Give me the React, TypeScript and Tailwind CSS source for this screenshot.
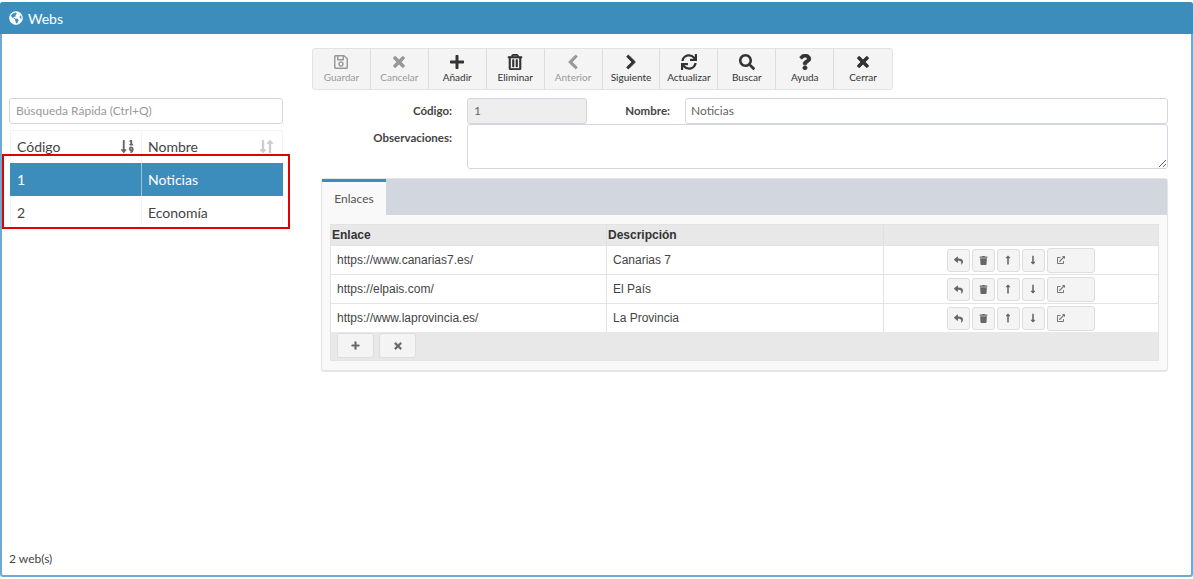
import { ReactNode } from "react"
import {
  FaExternalLinkAlt,
  FaGlobeAmericas,
  FaLongArrowAltDown,
  FaLongArrowAltUp,
  FaPlus,
  FaQuestion,
  FaRegSave,
  FaRegTrashAlt,
  FaReply,
  FaChevronLeft,
  FaChevronRight,
  FaSearch,
  FaSortNumericDown,
  FaSync,
  FaTimes,
  FaTrash,
} from "react-icons/fa"

const tools = [
  { label: "Guardar", icon: <FaRegSave className="h-4 w-4" />, off: true },
  { label: "Cancelar", icon: <FaTimes className="h-4 w-4" stroke="currentColor" strokeWidth={30} />, off: true },
  { label: "Añadir", icon: <FaPlus className="h-4 w-4" /> },
  { label: "Eliminar", icon: <FaRegTrashAlt className="h-4 w-4" stroke="currentColor" strokeWidth={20} /> },
  { label: "Anterior", icon: <FaChevronLeft className="h-4 w-4" stroke="currentColor" strokeWidth={30} />, off: true },
  { label: "Siguiente", icon: <FaChevronRight className="h-4 w-4" stroke="currentColor" strokeWidth={30} /> },
  { label: "Actualizar", icon: <FaSync className="h-4 w-4" /> },
  { label: "Buscar", icon: <FaSearch className="h-4 w-4" /> },
  { label: "Ayuda", icon: <FaQuestion className="h-4 w-4" stroke="currentColor" strokeWidth={20} /> },
  { label: "Cerrar", icon: <FaTimes className="h-4 w-4" stroke="currentColor" strokeWidth={30} /> },
]

const links = [
  { url: "https://www.canarias7.es/", desc: "Canarias 7" },
  { url: "https://elpais.com/", desc: "El País" },
  { url: "https://www.laprovincia.es/", desc: "La Provincia" },
]

function MiniButton({ children, wide }: { children: ReactNode; wide?: boolean }) {
  return (
    <button
      className={
        wide
          ? "flex h-[25px] w-12 items-center rounded-[3px] border border-[#ddd] bg-[#f4f4f4] pl-[9px] text-[#777]"
          : "flex h-[23px] w-[23px] items-center justify-center rounded-[3px] border border-[#ddd] bg-[#f4f4f4] text-[#666]"
      }
    >
      {children}
    </button>
  )
}

function LinkRow({ url, desc }: { url: string; desc: string }) {
  return (
    <div className="flex h-[29px] border-t border-[#e3e3e3] bg-white text-xs text-[#444] first:border-t-0 first:h-[30px]">
      <div className="flex w-[276px] items-center border-r border-[#e3e3e3] pl-[6px]">{url}</div>
      <div className="flex w-[277px] items-center border-r border-[#e3e3e3] pl-[6px]">{desc}</div>
      <div className="flex flex-1 items-center justify-center gap-[2px] pr-px">
        <MiniButton><FaReply className="h-[9px] w-[9px]" /></MiniButton>
        <MiniButton><FaTrash className="h-[9px] w-[9px]" /></MiniButton>
        <MiniButton><FaLongArrowAltUp className="h-[10px] w-[10px]" /></MiniButton>
        <MiniButton><FaLongArrowAltDown className="h-[10px] w-[10px]" /></MiniButton>
        <MiniButton wide><FaExternalLinkAlt className="h-[8px] w-[8px]" /></MiniButton>
      </div>
    </div>
  )
}

export default function App() {
  return (
    <div className="h-[579px] w-[1193px] bg-white pt-[2px] font-['Lato',sans-serif] text-[#444]">
      <div className="relative flex h-[575px] flex-col rounded-[3px] border-x-2 border-b-2 border-[#6fa9cf]">
        <header className="-mx-[2px] flex h-8 items-center gap-[5px] rounded-t-[3px] bg-[#3c8dbc] pl-[9px] text-[14px] text-white">
          <FaGlobeAmericas className="h-[14px] w-[14px]" />
          Webs
        </header>

        <div className="flex flex-1">
          <aside className="flex w-[310px] flex-col pl-[7px] pt-[64px]">
            <input
              readOnly
              placeholder="Búsqueda Rápida (Ctrl+Q)"
              className="h-[26px] w-[274px] rounded-[3px] border border-[#d2d6de] px-[6px] pb-px text-[12px] placeholder:text-[#999]"
            />
            <div className="ml-px mt-[6px] w-[273px] text-[14px]">
              <div className="flex h-[33px] border border-b-0 border-[#f4f4f4]">
                <div className="flex w-[131px] items-center justify-between border-r border-[#f4f4f4] px-[6px] pb-[2px]">
                  Código
                  <FaSortNumericDown className="h-[15px] w-[15px] text-[#666]" />
                </div>
                <div className="flex flex-1 items-center justify-between pb-[2px] pl-[6px] pr-[7px]">
                  Nombre
                  <span className="flex text-[#ccc]">
                    <FaLongArrowAltDown className="-mr-[3px] h-[15px] w-[10px]" />
                    <FaLongArrowAltUp className="h-[15px] w-[10px]" />
                  </span>
                </div>
              </div>
              <div className="flex h-[33px] bg-[#3c8dbc] text-white">
                <div className="flex w-[132px] items-center border-r border-[#9cc6df] pl-[7px]">1</div>
                <div className="flex flex-1 items-center pl-[6px]">Noticias</div>
              </div>
              <div className="flex h-[33px] border-x border-b border-[#f4f4f4] pt-px">
                <div className="flex w-[131px] items-center border-r border-[#f4f4f4] pl-[6px]">2</div>
                <div className="flex flex-1 items-center pl-[6px]">Economía</div>
              </div>
            </div>
            <div className="mt-auto pb-[7px] text-[12px]">2 web(s)</div>
          </aside>

          <main className="flex w-[857px] flex-col pt-[14px]">
            <div className="flex h-[42px] w-[581px] rounded-[3px] border border-[#e3e3e3] bg-[#f4f4f4]">
              {tools.map((t) => (
                <div
                  key={t.label}
                  className={
                    "flex w-[58px] flex-col items-center border-r border-[#ddd] pt-[5px] last:border-r-0 " +
                    (t.off ? "text-[#999]" : "text-[#333]")
                  }
                >
                  {t.icon}
                  <span className="mt-px text-[10px] leading-[13px]">{t.label}</span>
                </div>
              ))}
            </div>

            <div className="mt-2 flex h-[26px] items-center text-[11.5px]">
              <label className="w-[140px] text-right font-bold">Código:</label>
              <input readOnly value="1" className="ml-[15px] h-[26px] w-[120px] rounded-[3px] border border-[#d2d6de] bg-[#eee] px-[6px] pb-px text-[12px] text-[#666]" />
              <label className="w-[83px] text-right font-bold">Nombre:</label>
              <input readOnly value="Noticias" className="ml-[15px] h-[26px] w-[483px] rounded-[3px] border border-[#d2d6de] px-[5px] pb-px text-[12px] text-[#666]" />
            </div>
            <div className="flex text-[11.5px]">
              <label className="w-[140px] pt-[5px] text-right font-bold">Observaciones:</label>
              <textarea readOnly className="ml-[15px] h-[45px] w-[701px] rounded-[3px] border border-[#d2d6de]" />
            </div>

            <section className="ml-[9px] mt-[9px] w-[847px] rounded-[3px] border border-[#e5e5e5] bg-[#f9f9f9] pb-[9px] shadow-[0_1px_1px_rgba(0,0,0,0.1)]">
              <div className="flex h-9 bg-[#d2d6de]">
                <div className="flex w-[64px] items-center justify-center border-t-[3px] border-[#3c8dbc] bg-[#f9f9f9] pt-px text-[12px] text-[#555]">
                  Enlaces
                </div>
              </div>
              <div className="mx-2 mt-[9px] border border-[#e3e3e3] font-['Liberation_Sans',sans-serif]">
                <div className="flex h-5 bg-[#e8e8e8] text-xs font-bold text-[#333]">
                  <div className="flex w-[276px] items-center border-r border-[#e0e0e0] pl-px">Enlace</div>
                  <div className="flex w-[277px] items-center border-r border-[#e0e0e0] pl-px">Descripción</div>
                  <div className="flex-1" />
                </div>
                {links.map((l) => (
                  <LinkRow key={l.url} url={l.url} desc={l.desc} />
                ))}
                <div className="flex h-[28px] gap-[5px] bg-[#e8e8e8] pl-[6px] pt-px">
                  <button className="flex h-[25px] w-[37px] items-center justify-center rounded-[3px] border border-[#ddd] bg-[#f4f4f4] text-[#666]">
                    <FaPlus className="h-[9px] w-[9px]" stroke="currentColor" strokeWidth={20} />
                  </button>
                  <button className="flex h-[25px] w-[37px] items-center justify-center rounded-[3px] border border-[#ddd] bg-[#f4f4f4] text-[#666]">
                    <FaTimes className="h-[10px] w-[10px]" stroke="currentColor" strokeWidth={30} />
                  </button>
                </div>
              </div>
            </section>
          </main>
        </div>

        <div className="absolute left-[0px] top-[152px] h-[75px] w-[288px] border-2 border-[#e00000]" />
      </div>
    </div>
  )
}
